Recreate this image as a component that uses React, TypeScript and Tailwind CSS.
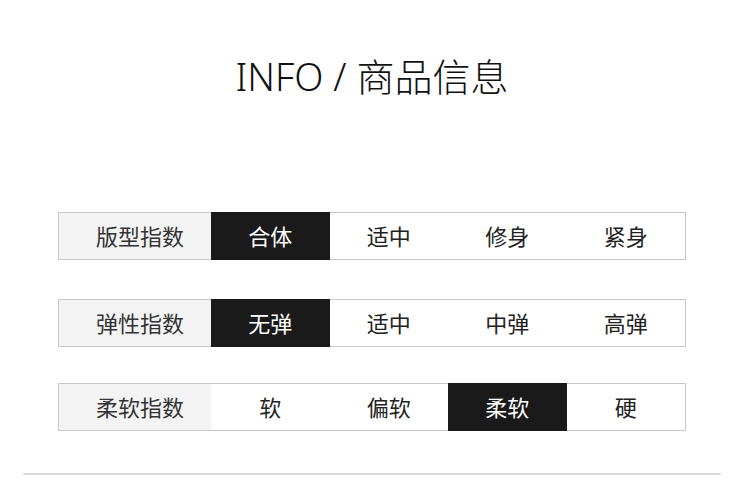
const rows = [
  { label: "版型指数", items: ["合体", "适中", "修身", "紧身"], active: 0, mt: "mt-0" },
  { label: "弹性指数", items: ["无弹", "适中", "中弹", "高弹"], active: 0, mt: "mt-[39px]" },
  { label: "柔软指数", items: ["软", "偏软", "柔软", "硬"], active: 2, mt: "mt-[36px]" },
];

const font = {
  fontFamily: '"Noto Sans", "Noto Sans CJK SC", sans-serif',
};

const App = () => {
  return (
    <div
      className="w-[750px] h-[504px] bg-white flex flex-col items-center pr-[6px] text-[#222]"
      style={font}
    >
      <h1 className="mt-[51px] text-[38px] font-light leading-[50px] text-[#111]">
        INFO / 商品信息
      </h1>

      <div className="mt-[111px] flex flex-col">
        {rows.map((row) => (
          <div
            key={row.label}
            className={`${row.mt} flex w-[628px] h-[48px] border border-[#c8c8c8]`}
          >
            <div className="w-[152px] bg-[#f3f3f3] flex items-center justify-center text-[22px] text-[#333] pl-[10px]">
              {row.label}
            </div>
            {row.items.map((item, i) => (
              <div
                key={i}
                className={
                  i === row.active
                    ? "flex-1 -my-px bg-[#1a1a1a] text-white flex items-center justify-center text-[22px]"
                    : "flex-1 flex items-center justify-center text-[22px] text-[#222]"
                }
              >
                {item}
              </div>
            ))}
          </div>
        ))}
      </div>

      <div className="mt-[42px] w-[698px] h-[2px] bg-[#dcdcdc]" />
    </div>
  );
};

export default App;
